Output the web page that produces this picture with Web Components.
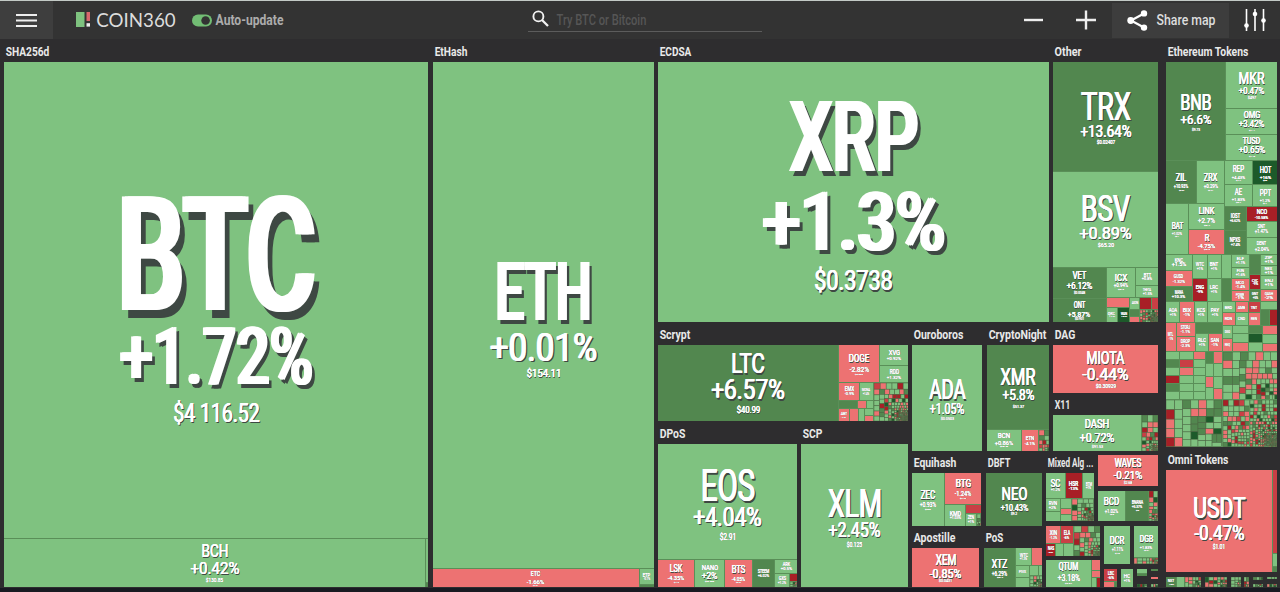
<!DOCTYPE html>
<html lang="en">
<head>
<meta charset="utf-8">
<title>COIN360</title>
<style>
    html, body { margin: 0; height: 100%; overflow: hidden; }
    body {
        background: #2e2d2f;
        font-family: Roboto, "Liberation Sans", sans-serif;
        color: #fff;
        display: flex;
        flex-direction: column;
    }
</style>
</head>
<body>
<top-bar></top-bar>
<coin-map></coin-map>

<script>
// One line of text squeezed to a given width and capital height
class FitText extends HTMLElement {
    constructor() {
        super();
        this.attachShadow({ mode: 'open' }).innerHTML = `
            <style>
                :host { display: block; flex: none; white-space: nowrap; }
                span { display: block; width: max-content; transform-origin: 0 50%; font-weight: 500; }
                :host([bold]) span { font-weight: 700; }
                :host([shadow]) span {
                    font-weight: 400;
                    text-shadow: .022em 0 #fff, -.022em 0 #fff,
                        .03em .045em #3e4843, .06em .045em #3e4843;
                }
                :host([shadow][big]) span {
                    font-weight: 500;
                    text-shadow: .028em 0 #fff, -.028em 0 #fff,
                        .03em .05em #3e4843, .072em .05em #3e4843;
                }
                :host([light]) span { font-weight: 400; font-family: Lato, sans-serif; }
            </style>
            <span><slot></slot></span>
        `;
    }

    connectedCallback() {
        const w = parseFloat(this.getAttribute('w'));
        const cap = parseFloat(this.getAttribute('cap'));
        const size = cap / 0.711;
        const span = this.shadowRoot.querySelector('span');
        this.toggleAttribute('big', cap >= 50);
        this.style.width = w + 'px';
        this.style.height = cap + 'px';
        span.style.fontSize = size + 'px';
        span.style.lineHeight = cap + 'px';
        span.style.transform = 'none';
        const natural = span.getBoundingClientRect().width;
        // side bearings of the first and last glyph stay outside the box
        const scale = w / (natural - size * 0.07);
        span.style.transform = `translate(${-size * 0.035 * scale}px, ${size * 0.014}px) scaleX(${scale})`;
    }
}
customElements.define('fit-text', FitText);

class TopBar extends HTMLElement {
    constructor() {
        super();
        this.attachShadow({ mode: 'open' }).innerHTML = `
            <style>
                :host {
                    display: flex;
                    align-items: center;
                    flex: none;
                    box-sizing: border-box;
                    height: 39px;
                    border-top: 1px solid #c3cac6;
                    background: #333;
                }
                svg { display: block; flex: none; }
                .menu {
                    width: 53px; height: 38px;
                    background: #3e3e3e;
                    display: flex; align-items: center; justify-content: center;
                }
                .logo { margin: -2px 6px 0 22px; }
                .name { color: #dcdcdc; margin-top: -1px; }
                .toggle { margin: 0 4px 0 17px; }
                .auto { color: #acacac; }
                .search {
                    margin-left: 245px;
                    width: 230px; height: 23px;
                    padding: 0 0 0 4px;
                    border-bottom: 1px solid #5c5c5c;
                    display: flex; align-items: center;
                    margin-top: -1px;
                }
                .search svg { margin-top: -2px; }
                .search fit-text { color: #565656; margin: 3px 0 0 8px; }
                .minus { margin-left: 262px; }
                .plus { margin-left: 33px; }
                .share {
                    margin-left: 16px;
                    width: 117px; height: 35px;
                    background: #3d3d3d;
                    display: flex; align-items: center;
                }
                .share svg { margin: 0 9px 0 15px; }
                .share fit-text { color: #dedede; }
                .tune { margin-left: 14px; }
            </style>
            <div class="menu">
                <svg width="21" height="13" viewBox="0 0 21 13" stroke="#eee" stroke-width="1.8">
                    <path d="M0 1h21M0 6.5h21M0 12h21"/>
                </svg>
            </div>
            <svg class="logo" width="16" height="15" viewBox="0 0 16 15">
                <rect x="1" y="0" width="8.5" height="15" fill="#7ec27f"/>
                <rect x="11.5" y="0" width="3.5" height="9" fill="#d8666c"/>
                <rect x="11.5" y="11.2" width="3.5" height="3.4" fill="#eee"/>
            </svg>
            <fit-text class="name" light w="78" cap="14">COIN360</fit-text>
            <svg class="toggle" width="20" height="13" viewBox="0 0 20 13">
                <rect x="0" y=".5" width="20" height="12" rx="6" fill="#72bd74"/>
                <circle cx="13.6" cy="6.5" r="4.3" fill="#333"/>
            </svg>
            <fit-text class="auto" bold w="67" cap="11">Auto-update</fit-text>
            <div class="search">
                <svg width="17" height="17" viewBox="0 0 17 17" fill="none" stroke="#f2f2f2">
                    <circle cx="6.4" cy="6.4" r="5" stroke-width="1.9"/>
                    <path d="M10 10l6 6" stroke-width="2.3"/>
                </svg>
                <fit-text w="89" cap="10.5">Try BTC or Bitcoin</fit-text>
            </div>
            <svg class="minus" width="19" height="20" viewBox="0 0 19 20"><path d="M0 10h19" stroke="#eee" stroke-width="2.4"/></svg>
            <svg class="plus" width="20" height="20" viewBox="0 0 20 20"><path d="M0 10h20M10 .5v19" stroke="#eee" stroke-width="2.4"/></svg>
            <div class="share">
                <svg width="21" height="21" viewBox="0 0 21 21" fill="#fff">
                    <path d="M17 3.5L4 10.5l13 7" fill="none" stroke="#fff" stroke-width="2.2"/>
                    <circle cx="17" cy="3.4" r="3.2"/><circle cx="3.7" cy="10.5" r="3.4"/><circle cx="17" cy="17.6" r="3.2"/>
                </svg>
                <fit-text w="58" cap="11">Share map</fit-text>
            </div>
            <svg class="tune" width="24" height="24" viewBox="0 0 24 24" fill="#fff">
                <path d="M3.5 1v22M12 1v22M20.5 1v22" stroke="#fff" stroke-width="1.6"/>
                <circle cx="3.5" cy="17.5" r="2.3"/><circle cx="12" cy="6" r="2.3"/><circle cx="20.5" cy="12.5" r="2.3"/>
            </svg>
        `;
    }
}
customElements.define('top-bar', TopBar);

// Row or column that holds tiles, panels and other stacks
class MapStack extends HTMLElement {
    constructor() {
        super();
        this.attachShadow({ mode: 'open' }).innerHTML = `
            <style>
                :host { display: flex; flex-direction: column; min-width: 0; min-height: 0; }
                :host([row]) { flex-direction: row; }
                :host([split]) { gap: 1px; background: #5a8f58; }
            </style>
            <slot></slot>
        `;
    }
}
customElements.define('map-stack', MapStack);

class MapPanel extends HTMLElement {
    constructor() {
        super();
        this.attachShadow({ mode: 'open' }).innerHTML = `
            <style>
                :host { display: flex; flex-direction: column; }
                header { flex: none; height: 22px; box-sizing: border-box; padding: 6.5px 0 0 1.5px; color: #e9e9e9; }
            </style>
            <header><fit-text bold cap="9.5"></fit-text></header>
            <slot></slot>
        `;
        this.titleEl = this.shadowRoot.querySelector('fit-text');
    }

    setTitle(text, width) {
        this.titleEl.textContent = text;
        this.titleEl.setAttribute('w', width);
    }
}
customElements.define('map-panel', MapPanel);

const COLORS = {
    g: '#7fc280',
    m: '#52874f',
    d: '#1d5a2a',
    r: '#ed7272',
    c: '#c93f45',
    k: '#a81f26'
};

class CoinTile extends HTMLElement {
    constructor() {
        super();
        this.attachShadow({ mode: 'open' }).innerHTML = `
            <style>
                :host { display: flex; flex-direction: column; align-items: center; min-width: 0; min-height: 0; overflow: hidden; }
                :host([center]) { justify-content: center; gap: 1.5px; }
            </style>
        `;
    }

    // each line reads "text|width|cap height|space above"
    setLines(lines) {
        lines.forEach(line => {
            const [text, w, cap, top] = line.split('|');
            const el = document.createElement('fit-text');
            el.textContent = text;
            el.setAttribute('w', w);
            el.setAttribute('cap', cap);
            el.setAttribute('shadow', '');
            if (top) el.style.marginTop = top + 'px';
            else this.setAttribute('center', '');
            this.shadowRoot.appendChild(el);
        });
    }
}
customElements.define('coin-tile', CoinTile);

// Squarified treemap for the long tail of small coins
class CoinMosaic extends HTMLElement {
    constructor() {
        super();
        this.attachShadow({ mode: 'open' }).innerHTML = `
            <style>
                :host { display: block; min-width: 0; min-height: 0; overflow: hidden; }
                svg { display: block; width: 100%; height: 100%; }
            </style>
        `;
    }

    draw(w, h, count, decay, seed) {
        let s = seed * 7919 + 17;
        const rnd = () => {
            s = (s * 1103515245 + 12345) % 2147483648;
            return s / 2147483648;
        };
        let vals = [];
        for (let i = 0; i < count; i++) vals.push(Math.exp(-i / decay));
        const sum = vals.reduce((a, b) => a + b, 0);
        vals = vals.map(v => v * w * h / sum);

        let x = 0, y = 0, rw = w, rh = h, out = '';
        const worst = (row, side) => {
            const t = row.reduce((a, b) => a + b, 0);
            return Math.max(side * side * row[0] / (t * t), t * t / (side * side * row[row.length - 1]));
        };
        while (vals.length) {
            const side = Math.min(rw, rh);
            const row = [vals.shift()];
            while (vals.length && worst([...row, vals[0]], side) <= worst(row, side)) row.push(vals.shift());
            const thick = row.reduce((a, b) => a + b, 0) / side;
            let pos = 0;
            row.forEach(v => {
                const len = v / thick;
                const p = rnd();
                const c = p < .45 ? 'g' : p < .67 ? 'r' : p < .79 ? 'm' : p < .86 ? 'd' : p < .93 ? 'c' : 'k';
                const box = rw >= rh ? [x, y + pos, thick, len] : [x + pos, y, len, thick];
                out += `<rect x="${box[0].toFixed(2)}" y="${box[1].toFixed(2)}" width="${box[2].toFixed(2)}" height="${box[3].toFixed(2)}" fill="${COLORS[c]}"/>`;
                pos += len;
            });
            if (rw >= rh) { x += thick; rw -= thick; } else { y += thick; rh -= thick; }
        }
        this.shadowRoot.innerHTML += `<svg viewBox="0 0 ${w} ${h}" preserveAspectRatio="none" stroke="#4d6544" stroke-width=".5">${out}</svg>`;
    }
}
customElements.define('coin-mosaic', CoinMosaic);

// Numbers share the parent's space; objects give fixed sizes in px
function place(el, size) {
    if (typeof size === 'number') {
        el.style.flex = `${size} 1 0px`;
        return el;
    }
    el.style.flex = 'none';
    if (size.w) el.style.width = size.w + 'px';
    if (size.h) el.style.height = size.h + 'px';
    if (size.ml) el.style.marginLeft = size.ml + 'px';
    if (size.mt) el.style.marginTop = size.mt + 'px';
    return el;
}

function stack(size, attrs, kids) {
    const el = place(document.createElement('map-stack'), size);
    attrs.forEach(a => el.setAttribute(a, ''));
    el.append(...kids);
    return el;
}
const row = (size, ...kids) => stack(size, ['row'], kids);
const col = (size, ...kids) => stack(size, [], kids);
const hs = (size, ...kids) => stack(size, ['row', 'split'], kids);
const vs = (size, ...kids) => stack(size, ['split'], kids);

function tile(size, color, ...lines) {
    const el = place(document.createElement('coin-tile'), size);
    el.style.background = COLORS[color];
    el.setLines(lines);
    return el;
}

let seed = 3;
function mosaic(size, w, h, count, decay) {
    const el = place(document.createElement('coin-mosaic'), size);
    el.draw(w, h, count, decay, seed++);
    return el;
}

function panel(size, title, titleWidth, content) {
    const el = place(document.createElement('map-panel'), size);
    el.setTitle(title, titleWidth);
    el.append(content);
    return el;
}

const sha = () => panel({ w: 424, h: 547 }, 'SHA256d', 43, vs(1,
    tile(476, 'g', 'BTC|191|114|134', '+1.72%|189|57|18', '$4 116.52|85|18|20'),
    hs(48,
        tile(421, 'g', 'BCH|26|13|5', '+0.42%|48|12|5', '$130.85|17|4|4'),
        vs(2, tile(42, 'g'), tile(4, 'm')))
));

const ethash = () => panel({ w: 221, h: 547, ml: 5 }, 'EtHash', 32, vs(1,
    tile(506, 'g', 'ETH|93|58|200', '+0.01%|105|27|14', '$154.11|34|8|9'),
    hs(18,
        tile(205, 'r', 'ETC|9|4.5|2.5', '-1.66%|17|4|3.5', '$4.31|5|1.5|1'),
        vs(14, tile(15, 'g', 'ETP|7|4', '-0.1%|6|2'), tile(2, 'm')))
));

const ecdsa = () => panel({ w: 391, h: 282 }, 'ECDSA', 31,
    tile(1, 'g', 'XRP|124|70|40', '+1.3%|178|58|20', '$0.3738|77|19|22'));

const other = () => panel({ w: 105, h: 282, ml: 4 }, 'Other', 26, vs(1,
    tile(109, 'm', 'TRX|48|28|30', '+13.64%|50|12|5', '$0.02407|18|4|3'),
    tile(96, 'g', 'BSV|47|26|23', '+0.89%|51|12|6', '$65.20|16|4|4'),
    hs(54,
        vs(53,
            tile(30, 'm', 'VET|13|8|4', '+6.12%|25|6.5|3', '$0.0048|11|2|2'),
            tile(24, 'm', 'ONT|11|6.5|3', '+5.87%|22|5.5|3.5', '$0.901|9|2|1')),
        vs(52,
            hs(29,
                tile(29, 'g', 'ICX|12|7|6', '+0.94%|14|3.5|3', '$0.2|6|1.5|1'),
                vs(22, tile(17, 'g', 'BTT|7|4', '+0.8%|10|2'), tile(12, 'g', 'THETA|8|3', '+1.5%|9|2'))),
            hs(24,
                vs(24, tile(9, 'r'), hs(15, tile(12, 'g', 'QKC|7|3', '+1%|6|1.5'), tile(12, 'd', 'WAN|6|3', '+9%|6|1.5'))),
                vs(9, tile(12, 'g', 'AION|6|2.5'), tile(7, 'm'), tile(6, 'r')),
                vs(19, hs(11, tile(12, 'k'), tile(7, 'c')), mosaic(13, 19, 13, 70, 26)))))
));

const scrypt = () => panel({ w: 250, h: 98 }, 'Scrypt', 30, hs(1,
    tile(180, 'm', 'LTC|32|20|8.5', '+6.57%|72|19|7', '$40.99|23|6.5|7'),
    vs(69,
        hs(37,
            tile(40, 'r', 'DOGE|20|8|10', '-2.82%|19|5|3.5', '$0.002|8|1.5|2'),
            vs(28, tile(20, 'g', 'XVG|11|5.5', '+0.92%|14|3'), tile(16, 'g', 'RDD|9|4.5', '+1.32%|14|3'))),
        hs(38,
            vs(34,
                hs(17, tile(21, 'r', 'EMX|9|4.5', '-0.9%|9|2.5'), tile(13, 'g', 'MONA|8|3', '+1.4%|6|2')),
                vs(21,
                    hs(8, tile(19, 'm'), tile(8, 'r'), tile(6, 'g')),
                    hs(12, tile(10, 'r', 'ABT|6|3', '-1%|5|1.5'), tile(9, 'r'), tile(5, 'g'), vs(8, tile(1, 'g'), tile(1, 'r'))))),
            mosaic(35, 35, 38, 170, 34)))
));

const dpos = () => panel({ w: 139, h: 165 }, 'DPoS', 25, vs(1,
    tile(115, 'g', 'EOS|52|31|26', '+4.04%|67|18|8', '$2.91|16|6|7'),
    hs(27,
        tile(36, 'r', 'LSK|12|7.5|5', '-4.35%|16|4|3.5', '$1.2|5|1.5|2'),
        tile(29, 'g', 'NANO|16|5.5|4.5', '+2%|15|6.5|2.5', '$0.88|9|1.5|2'),
        tile(27, 'r', 'BTS|13|7.5|6', '-4.05%|13|4|3', '$0.04|5|1.5|1'),
        tile(21, 'm', 'STEEM|11|3.5', '+6.02%|11|2.5'),
        vs(22,
            tile(13, 'g', 'ARK|7|3.5', '+0.5%|11|2.5'),
            hs(13, tile(15, 'g', 'GXS|7|3.5', '+1.2%|8|2'), vs(7, tile(8, 'k'), mosaic(5, 7, 5, 8, 4)))))
));

const scp = () => panel({ w: 107, h: 165, ml: 4 }, 'SCP', 19,
    tile(1, 'g', 'XLM|52|28|45', '+2.45%|51|14|7', '$0.125|15|5|4'));

const upperRight = () => row({ h: 128 },
    panel({ w: 70 }, 'Ouroboros', 49, tile(1, 'g', 'ADA|35|20|34.5', '+1.05%|34|10|4', '$0.0503|13|3|3')),
    panel({ w: 62, ml: 5 }, 'CryptoNight', 57, vs(1,
        tile(84, 'm', 'XMR|34|17.5|23', '+5.8%|31|10|4.5', '$51.37|11|3|5'),
        hs(21,
            tile(34, 'g', 'BCN|12|5.5|3', '+0.86%|18|4|2.5', '$0.0|8|1.5|1'),
            tile(16, 'r', 'ETN|8|4', '-4.1%|10|3'),
            mosaic(10, 10, 21, 16, 7)))),
    col({ w: 105, ml: 4 },
        panel({ h: 70 }, 'DAG', 20, tile(1, 'r', 'MIOTA|37|13|6', '-0.44%|45|12|4', '$0.30929|20|4|4')),
        panel({ h: 58 }, 'X11', 15, hs(1,
            tile(88, 'g', 'DASH|24|9.5|4', '+0.72%|34|9|4', '$91.53|11|3|3.5'),
            mosaic(16, 16, 36, 60, 14))))
);

const proofs = () => col({ w: 130 },
    row({ h: 74.5 },
        panel({ w: 69 }, 'Equihash', 42, hs(1,
            tile(32, 'g', 'ZEC|14|8.5|18', '+0.93%|16|4.5|3.5', '$56|6|1.5|1'),
            vs(36,
                tile(31, 'r', 'BTG|15|8|7', '-1.24%|16|4.5|3.5', '$12|6|1.5|1.5'),
                hs(20,
                    tile(20, 'g', 'KMD|11|5', '+1.03%|11|2.5'),
                    vs(15, tile(8, 'c'), hs(11, tile(11, 'g', 'ZEN|6|3.5', '+1%|6|2'), mosaic(4, 4, 11, 6, 2))))))),
        panel({ w: 56, ml: 5 }, 'DBFT', 22, tile(1, 'm', 'NEO|25|13.5|14', '+10.43%|27|6.5|4.5', '$9.2|6|2|1.5'))),
    row({ h: 61, mt: .5 },
        panel({ w: 67 }, 'Apostille', 41, tile(1, 'r', 'XEM|20|10.5|6.5', '-0.85%|31|8.5|4.5', '$0.0431|13|2|2')),
        panel({ w: 58, ml: 5 }, 'PoS', 17, hs(1,
            tile(32, 'm', 'XTZ|15|9|11', '+6.29%|15|4.5|3.5', '$0.4|6|1.5|1'),
            vs(26,
                hs(17, tile(15, 'g', 'WTC|8|4', '+1.3%|7|2'), tile(10, 'r')),
                hs(21,
                    vs(13, tile(10, 'g', 'PIVX|7|3'), tile(9, 'g')),
                    vs(13, hs(9, tile(9, 'g'), tile(4, 'g')), mosaic(10, 13, 10, 22, 9)))))))
);

const mixed = () => col({ w: 112, ml: 4 },
    row({ h: 70 },
        panel({ w: 48 }, 'Mixed Alg ...', 45, vs(1,
            hs(26,
                tile(19, 'g', 'SC|9|7.5', '+1.2%|9|2.5'),
                tile(17, 'k', 'HSR|9|5', '-13%|9|2'),
                tile(11, 'g', 'BTM|6|4', '+1%|5|2')),
            hs(22,
                vs(14, tile(12, 'g', 'RVN|8|4', '+2%|7|2'), tile(10, 'g')),
                vs(11, tile(9, 'g'), tile(6, 'r'), tile(6, 'g')),
                mosaic(22, 22, 22, 65, 14)))),
        col({ w: 60, ml: 4 },
            tile({ h: 31, mt: 4 }, 'r', 'WAVES|26|8.5|4', '-0.21%|28|8|4', '$2.68|8|2|2'),
            hs({ h: 30, mt: 5 },
                tile(28, 'g', 'BCD|15|8|7', '+1.02%|13|4|3', '$0.8|4|1.5|1'),
                tile(23, 'm', 'BNANA|11|4|9', '+5.37%|10|2.5|2', '$0|3|1.5|1'),
                mosaic(9, 9, 30, 26, 9)))),
    row({ h: 61, mt: 5 },
        col({ w: 54 },
            hs({ h: 30 },
                vs(27,
                    hs(17, tile(15, 'r', 'XIN|7|4.5', '-1.2%|7|2'), tile(12, 'c', 'ELA|6|4.5', '-6%|5|2')),
                    hs(12, tile(10, 'k', 'NAS|6|3.5', '-9%|5|1.5'), tile(8, 'g'), tile(9, 'g'))),
                mosaic(27, 27, 30, 80, 16)),
            hs({ h: 27, mt: 4 },
                tile(46, 'g', 'QTUM|19|8|3', '+3.18%|22|6|3.5', '$2.04|7|1.5|2'),
                vs(8, tile(10, 'r'), tile(7, 'r'), hs(9, tile(1, 'g'), tile(1, 'k'))))),
        col({ w: 54, ml: 4 },
            row({ h: 38 },
                tile({ w: 26 }, 'g', 'DCR|14|8|11', '+1.11%|11|3.5|3', '$16|5|1.5|1'),
                vs({ w: 24, ml: 4 },
                    tile(32, 'g', 'DGB|13|6.5|10', '+1.83%|12|3|3', '$0.01|5|1.5|1'),
                    mosaic(6, 24, 6, 18, 8))),
            row({ h: 18, mt: 5 },
                vs({ w: 13 }, tile(13, 'c', 'LBC|6|4', '-6%|6|2'), hs(5, tile(11, 'r'), tile(2, 'm'))),
                tile({ w: 12, ml: 4 }, 'g', 'HC|6|4', '+1%|6|2'),
                col({ w: 10, ml: 4 }, vs({ h: 7 }, tile(5, 'g'), tile(2, 'm')), mosaic({ h: 3, mt: 8 }, 10, 3, 5, 4)),
                col({ w: 7, ml: 4 }, tile({ h: 2 }, 'm'), tile({ h: 2, mt: 6 }, 'r'), mosaic({ h: 3, mt: 5 }, 7, 3, 4, 3)))))
);

const tokens = () => panel({ h: 407 }, 'Ethereum Tokens', 80, vs(1,
    hs(99,
        tile(59, 'm', 'BNB|30|15.5|33', '+6.6%|30|8.5|5', '$9.73|8|3|4'),
        vs(51,
            tile(46, 'g', 'MKR|25|12|10', '+0.47%|25|6.5|4', '$497|8|2|2'),
            tile(26, 'g', 'OMG|16|7|2.5', '+3.42%|25|6.5|3', '$1.1|6|1.5|2'),
            tile(25, 'g', 'TUSD|17|6.5|2.5', '+0.65%|26|6.5|3', '$1.0|6|1.5|2'))),
    hs(93,
        vs(58,
            hs(42,
                tile(30, 'm', 'ZIL|10|8|13', '+10.93%|14|3.5|3', '$0.02|5|1.5|1'),
                tile(27, 'g', 'ZRX|13|8|13', '+0.29%|14|3.5|3', '$0.24|5|1.5|1')),
            hs(50,
                tile(22, 'g', 'BAT|11|6.5|19', '+1.02%|10|3|3', '$0.1|4|1.5|1'),
                vs(35,
                    tile(26, 'g', 'LINK|15|7|3.5', '+2.7%|17|5.5|4', '$0.4|6|1.5|1.5'),
                    tile(24, 'r', 'R|4|7|4', '-4.75%|17|4|3', '$0.2|6|1.5|1')))),
        vs(52,
            hs(23, tile(27, 'g', 'REP|11|6|4.5', '+4.43%|13|3|4', '$14|5|1.5|1'), tile(24, 'd', 'HOT|11|6|5.5', '+16%|11|3|3', '$0|4|1.5|1')),
            hs(22, tile(27, 'g', 'AE|7|6|4', '+1.83%|13|3|3', '$0.4|5|1.5|1'), tile(24, 'g', 'PPT|11|6|5', '+1.2%|10|3|3', '$1|4|1.5|1')),
            hs(48,
                vs(21, tile(24, 'm', 'IOST|9|4.5', '+6.62%|10|2.5'), tile(23, 'm', 'NPXS|10|4.5', '+7.4%|9|2.5')),
                vs(31, tile(15, 'k', 'NCO|10|4.5', '-10.58%|13|3'), tile(15, 'g', 'SNT|7|3.5', '+1.47%|13|3.5'), tile(16, 'g', 'DENT|9|4', '+2.04%|14|4'))))),
    hs(47,
        vs(27, tile(16, 'g', 'KNC|8|4', '+1.5%|14|3.5'), tile(16, 'r', 'GUSD|9|4', '-1.32%|12|3'), tile(15, 'm', 'MANA|8|4', '+10.3%|13|3')),
        vs(15, tile(24, 'g', 'WTC|8|3.5', '+1%|6|2'), tile(23, 'k', 'ENG|8|3.5', '-9%|6|2')),
        vs(14, tile(24, 'g', 'BNT|8|3.5', '+1%|6|2'), tile(23, 'g', 'LRC|8|3.5', '+1%|6|2')),
        vs(9, tile(24, 'g'), tile(23, 'm')),
        vs(19, tile(13, 'g', 'ELF|7|3', '+1.1%|9|2'), tile(11, 'g', 'FUN|7|3', '+1.6%|9|2'), tile(12, 'r', 'MCO|8|3', '-1.4%|9|2'), tile(11, 'r', 'POWR|8|3', '-1%|8|2')),
        vs(10, tile(21, 'm'), tile(14, 'k', 'CVC|6|3', '-9%|5|2'), tile(12, 'm', 'GNT|6|3', '+5%|5|2')),
        vs(17, tile(11, 'g', 'ZIP|7|3', '+1%|8|2'), tile(10, 'g', 'NEX|7|3', '+1%|8|2'), tile(14, 'g', 'ENJ|8|3', '+1%|8|2'), tile(12, 'r', 'QASH|8|3', '-2%|8|2'))),
    hs(49,
        vs(56,
            hs(20, tile(14, 'g', 'AOA|8|3.5', '+1%|6|2'), tile(15, 'r', 'BIX|8|3.5', '-1%|6|2'), tile(13, 'g', 'KCS|8|3.5', '+1%|6|2'), tile(14, 'g', 'PAY|8|3.5', '+1%|6|2')),
            hs(28,
                tile(10, 'r', 'MTL|5|3.5', '-1%|4|2'),
                vs(19, tile(1, 'r', 'STORJ|9|3.5', '-1.1%|9|2.5'), tile(1, 'r', 'DROP|9|3.5', '-2.3%|9|2.5')),
                vs(27, tile(10, 'm'), hs(18, tile(13, 'g', 'RLC|8|4', '+1%|6|2'), tile(14, 'r', 'SAN|8|4', '-1%|6|2'))))),
        vs(55,
            hs(23,
                vs(13, tile(11, 'g', 'BRD|7|3'), tile(12, 'r', 'RDN|7|3')),
                vs(13, tile(11, 'r', 'AMB|7|3'), tile(12, 'g', 'CND|7|3')),
                vs(12, tile(11, 'c', 'TNT|6|3'), tile(12, 'r', 'REN|6|3')),
                vs(17, tile(7, 'g'), hs(16, tile(9, 'm'), tile(8, 'k')))),
            hs(26,
                vs(10, tile(13, 'g', 'DGD|5|3'), tile(13, 'r', 'REQ|5|3')),
                vs(16, tile(8, 'g'), tile(9, 'g'), tile(9, 'r')),
                vs(14, tile(8, 'm'), tile(9, 'd'), tile(9, 'g')),
                vs(15, tile(9, 'r'), tile(9, 'g'), tile(8, 'r'))))),
    hs(96,
        vs(56,
            hs(48,
                vs(14, tile(8, 'g'), tile(8, 'm'), tile(8, 'g'), tile(8, 'k'), tile(8, 'm'), tile(8, 'g')),
                vs(14, tile(8, 'g'), tile(8, 'c'), tile(8, 'r'), tile(8, 'g'), tile(8, 'g'), tile(8, 'g')),
                vs(12, tile(8, 'r'), tile(8, 'g'), tile(8, 'g'), tile(8, 'g'), tile(8, 'g'), tile(8, 'g')),
                vs(8, tile(12, 'm'), tile(13, 'g'), tile(11, 'r'), tile(12, 'g')),
                vs(8, tile(12, 'r'), tile(13, 'g'), tile(12, 'g'), tile(11, 'r'))),
            mosaic(47, 56, 47, 44, 55)),
        vs(55,
            mosaic(48, 55, 48, 72, 38),
            hs(47,
                mosaic(27, 27, 47, 75, 45),
                mosaic(28, 28, 47, 230, 80))))
));

const omni = () => panel({ h: 124, mt: 1 }, 'Omni Tokens', 60, hs(1,
    tile(106, 'r', 'USDT|51|21|28', '-0.47%|49|15|6', '$1.01|12|5|4'),
    vs(4, tile(85, 'c'), tile(12, 'g'), tile(5, 'm'))
));

const leftovers = () => row({ h: 10, mt: 5 },
    hs({ w: 35 }, tile(11, 'm', 'NXT|6|3', '+5%|5|1.5'), tile(7, 'g'), mosaic(17, 17, 10, 18, 9)),
    mosaic({ w: 22, ml: 4 }, 22, 10, 24, 12),
    mosaic({ w: 10, ml: 4 }, 10, 10, 14, 7),
    mosaic({ w: 5, ml: 3 }, 5, 10, 7, 5),
    col({ w: 10, ml: 4 }, mosaic({ h: 3 }, 10, 3, 4, 4), mosaic({ h: 3, mt: 4 }, 10, 3, 7, 4)),
    col({ w: 10, ml: 4 }, mosaic({ h: 2 }, 10, 2, 3, 3), mosaic({ h: 3, mt: 5 }, 10, 3, 6, 4))
);

class CoinMap extends HTMLElement {
    constructor() {
        super();
        this.attachShadow({ mode: 'open' }).innerHTML = `
            <style>
                :host {
                    display: flex;
                    flex: none;
                    box-sizing: border-box;
                    width: 1280px;
                    height: 553px;
                    padding: 1px 3px 0 4px;
                    border-bottom: 4px solid #191a22;
                }
            </style>
        `;
        this.shadowRoot.append(
            sha(),
            ethash(),
            col({ w: 500, h: 547, ml: 4 },
                row({ h: 282 }, ecdsa(), other()),
                row({ h: 264, mt: 1 },
                    col({ w: 250 }, scrypt(), row({ h: 165, mt: 1 }, dpos(), scp())),
                    col({ w: 246, ml: 4 }, upperRight(), row({ h: 136 }, proofs(), mixed())))),
            col({ w: 111, h: 547, ml: 8 }, tokens(), omni(), leftovers())
        );
    }
}
customElements.define('coin-map', CoinMap);
</script>
</body>
</html>
